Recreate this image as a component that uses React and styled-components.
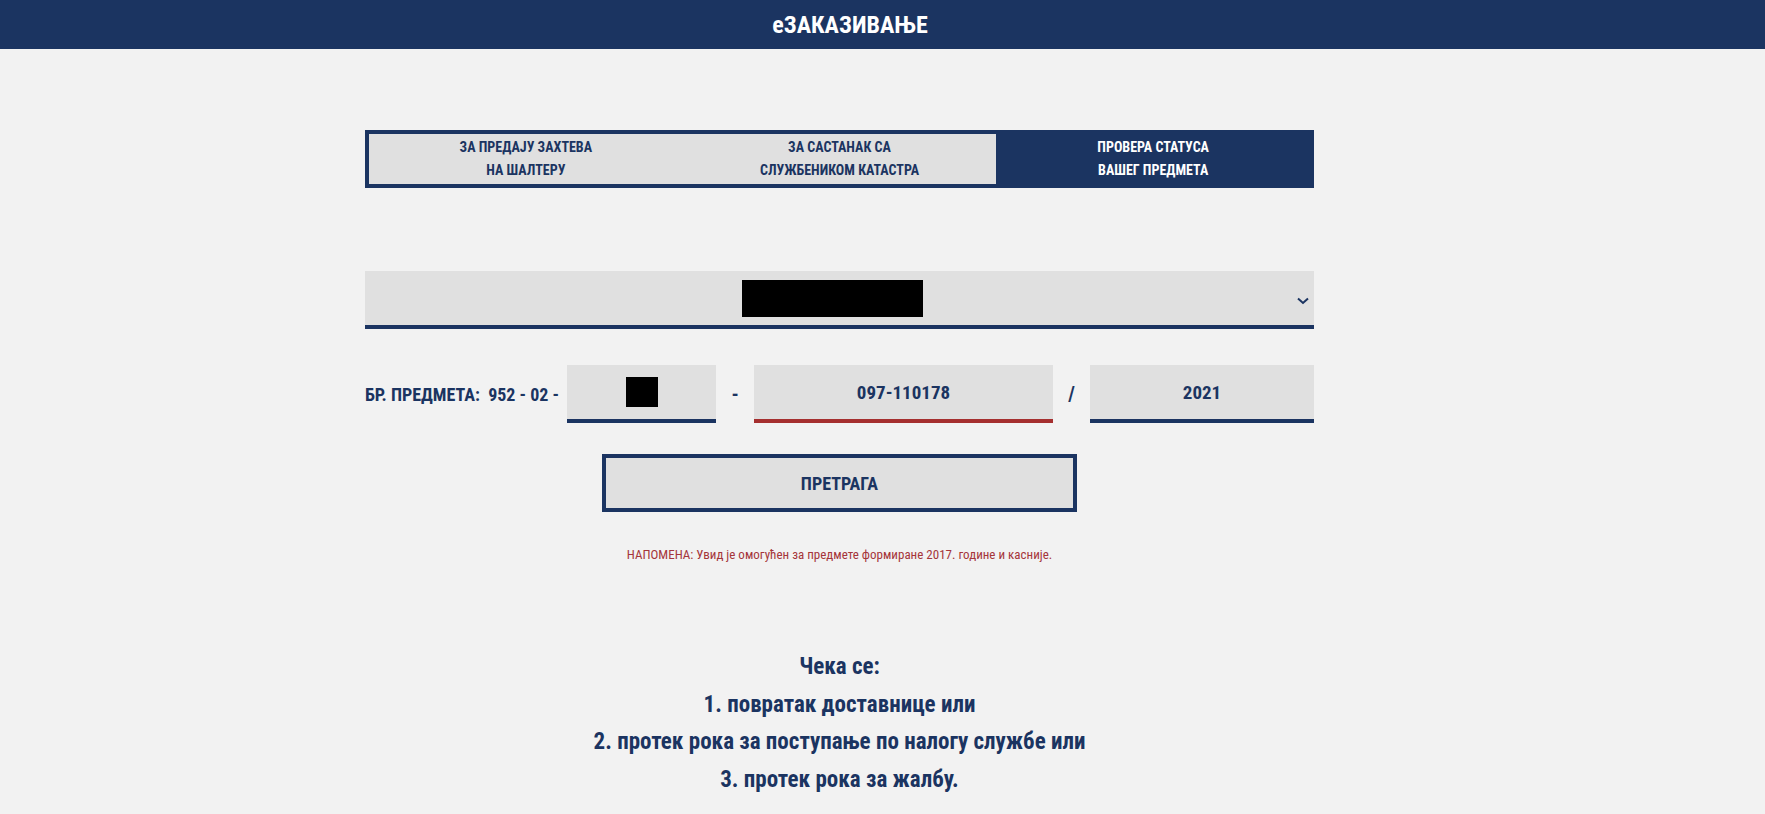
import styled, { createGlobalStyle } from "styled-components";

const navy = "#1b3461";
const light = "#e0e0e0";

const Global = createGlobalStyle`
  body {
    margin: 0;
    background: #f2f2f2;
    font-family: "Roboto Condensed", "Liberation Sans Narrow", "DejaVu Sans", sans-serif;
    font-stretch: condensed;
    color: ${navy};
  }
`;

const Header = styled.header`
  height: 49px;
  background: ${navy};
  display: flex;
  align-items: center;
  justify-content: center;
  padding-right: 65px;
  h1 {
    margin: 0;
    color: #fff;
    font-size: 24px;
    font-weight: 700;
  }
`;

const Main = styled.main`
  width: 949px;
  padding: 81px 0 40px 365px;
`;

const Tabs = styled.div`
  display: grid;
  grid-template-columns: repeat(3, 1fr);
  border: 4px solid ${navy};
  height: 50px;
`;

const Tab = styled.div`
  display: flex;
  align-items: center;
  justify-content: center;
  text-align: center;
  font-size: 14px;
  line-height: 23px;
  font-weight: 700;
  background: ${(p) => (p.$active ? navy : light)};
  color: ${(p) => (p.$active ? "#fff" : navy)};
`;

const Select = styled.div`
  position: relative;
  margin-top: 83px;
  height: 54px;
  background: ${light};
  border-bottom: 4px solid ${navy};
  display: flex;
  align-items: center;
  justify-content: center;
  padding-right: 14px;
`;

const Redacted = styled.div`
  background: #000;
  width: ${(p) => p.$w}px;
  height: ${(p) => p.$h}px;
`;

const Chevron = styled.svg`
  position: absolute;
  right: 5px;
  top: 26px;
`;

const CaseRow = styled.div`
  margin-top: 36px;
  display: flex;
  align-items: center;
`;

const Label = styled.div`
  width: 202px;
  flex-shrink: 0;
  font-size: 18px;
  font-weight: 700;
  white-space: pre;
`;

const Field = styled.div`
  width: ${(p) => p.$w}px;
  flex-shrink: 0;
  height: 54px;
  background: ${light};
  border-bottom: 4px solid ${(p) => (p.$error ? "#a52f2f" : navy)};
  display: flex;
  align-items: center;
  justify-content: center;
  font-size: 19px;
  font-weight: 700;
`;

const Sep = styled.div`
  width: ${(p) => p.$w}px;
  flex-shrink: 0;
  text-align: center;
  font-size: 20px;
  font-weight: 700;
`;

const SearchButton = styled.button`
  display: block;
  margin: 31px auto 0;
  width: 475px;
  height: 58px;
  border: 4px solid ${navy};
  background: ${light};
  color: ${navy};
  font-family: inherit;
  font-stretch: inherit;
  font-size: 18px;
  font-weight: 700;
`;

const Note = styled.p`
  margin: 35px 0 0;
  text-align: center;
  color: #a5353a;
  font-size: 13px;
  line-height: 16px;
`;

const Waiting = styled.div`
  margin-top: 85px;
  text-align: center;
  font-size: 23px;
  font-weight: 700;
  line-height: 37.7px;
`;

export default function App() {
  return (
    <>
      <Global />
      <Header>
        <h1>еЗАКАЗИВАЊЕ</h1>
      </Header>
      <Main>
        <Tabs>
          <Tab>
            ЗА ПРЕДАЈУ ЗАХТЕВА
            <br />
            НА ШАЛТЕРУ
          </Tab>
          <Tab>
            ЗА САСТАНАК СА
            <br />
            СЛУЖБЕНИКОМ КАТАСТРА
          </Tab>
          <Tab $active>
            ПРОВЕРА СТАТУСА
            <br />
            ВАШЕГ ПРЕДМЕТА
          </Tab>
        </Tabs>
        <Select>
          <Redacted $w={181} $h={37} />
          <Chevron width="12" height="8" viewBox="0 0 12 8">
            <path d="M1 1.5 L6 6 L11 1.5" fill="none" stroke={navy} strokeWidth="2" />
          </Chevron>
        </Select>
        <CaseRow>
          <Label>БР. ПРЕДМЕТА:  952 - 02 -</Label>
          <Field $w={149}>
            <Redacted $w={32} $h={30} />
          </Field>
          <Sep $w={38}>-</Sep>
          <Field $w={299} $error>
            097-110178
          </Field>
          <Sep $w={37}>/</Sep>
          <Field $w={224}>2021</Field>
        </CaseRow>
        <SearchButton>ПРЕТРАГА</SearchButton>
        <Note>НАПОМЕНА: Увид је омогућен за предмете формиране 2017. године и касније.</Note>
        <Waiting>
          Чека се:
          <br />
          1. повратак доставнице или
          <br />
          2. протек рока за поступање по налогу службе или
          <br />
          3. протек рока за жалбу.
        </Waiting>
      </Main>
    </>
  );
}
